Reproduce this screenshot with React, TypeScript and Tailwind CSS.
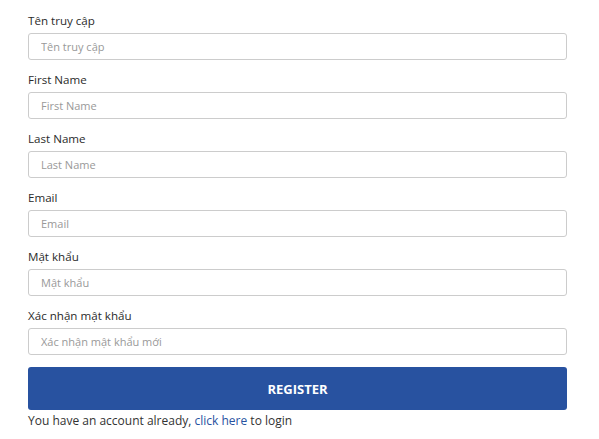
import { useState } from "react";

type Field = {
  name: string;
  label: string;
  placeholder: string;
  type?: string;
};

const fields: Field[] = [
  { name: "username", label: "Tên truy cập", placeholder: "Tên truy cập" },
  { name: "firstName", label: "First Name", placeholder: "First Name" },
  { name: "lastName", label: "Last Name", placeholder: "Last Name" },
  { name: "email", label: "Email", placeholder: "Email", type: "email" },
  { name: "password", label: "Mật khẩu", placeholder: "Mật khẩu", type: "password" },
  { name: "confirm", label: "Xác nhận mật khẩu", placeholder: "Xác nhận mật khẩu mới", type: "password" },
];

const App = () => {
  const [values, setValues] = useState<Record<string, string>>({});

  return (
    <div className="min-h-screen bg-white font-['Open_Sans',sans-serif] text-[#333]">
      <form
        className="w-[539px] ml-[28px] pt-[10px]"
        onSubmit={(e) => e.preventDefault()}
      >
        {fields.map((f) => (
          <div key={f.name} className="mb-[9px]">
            <label htmlFor={f.name} className="block text-[11.6px] leading-[22px] mb-[1px] font-medium text-[#2b2b2b]">
              {f.label}
            </label>
            <input
              id={f.name}
              type={f.type || "text"}
              placeholder={f.placeholder}
              value={values[f.name] || ""}
              onChange={(e) => setValues({ ...values, [f.name]: e.target.value })}
              className="block w-full h-[27px] px-[12px] text-[11px] border border-[#ccc] rounded-[3px] bg-white placeholder:text-[#999] outline-none focus:border-[#2852a0]"
            />
          </div>
        ))}

        {/* Submit */}
        <button
          type="submit"
          className="mt-[3px] w-full h-[43px] pt-[3px] rounded-[3px] bg-[#2852a0] text-white text-[13px] font-bold uppercase"
        >
          Register
        </button>
        <p className="text-[12px] leading-[19px] pt-[1px] text-[#333]">
          You have an account already,{" "}
          <a href="#" className="text-[#2852a0]">click here</a> to login
        </p>
      </form>
    </div>
  );
};

export default App;
